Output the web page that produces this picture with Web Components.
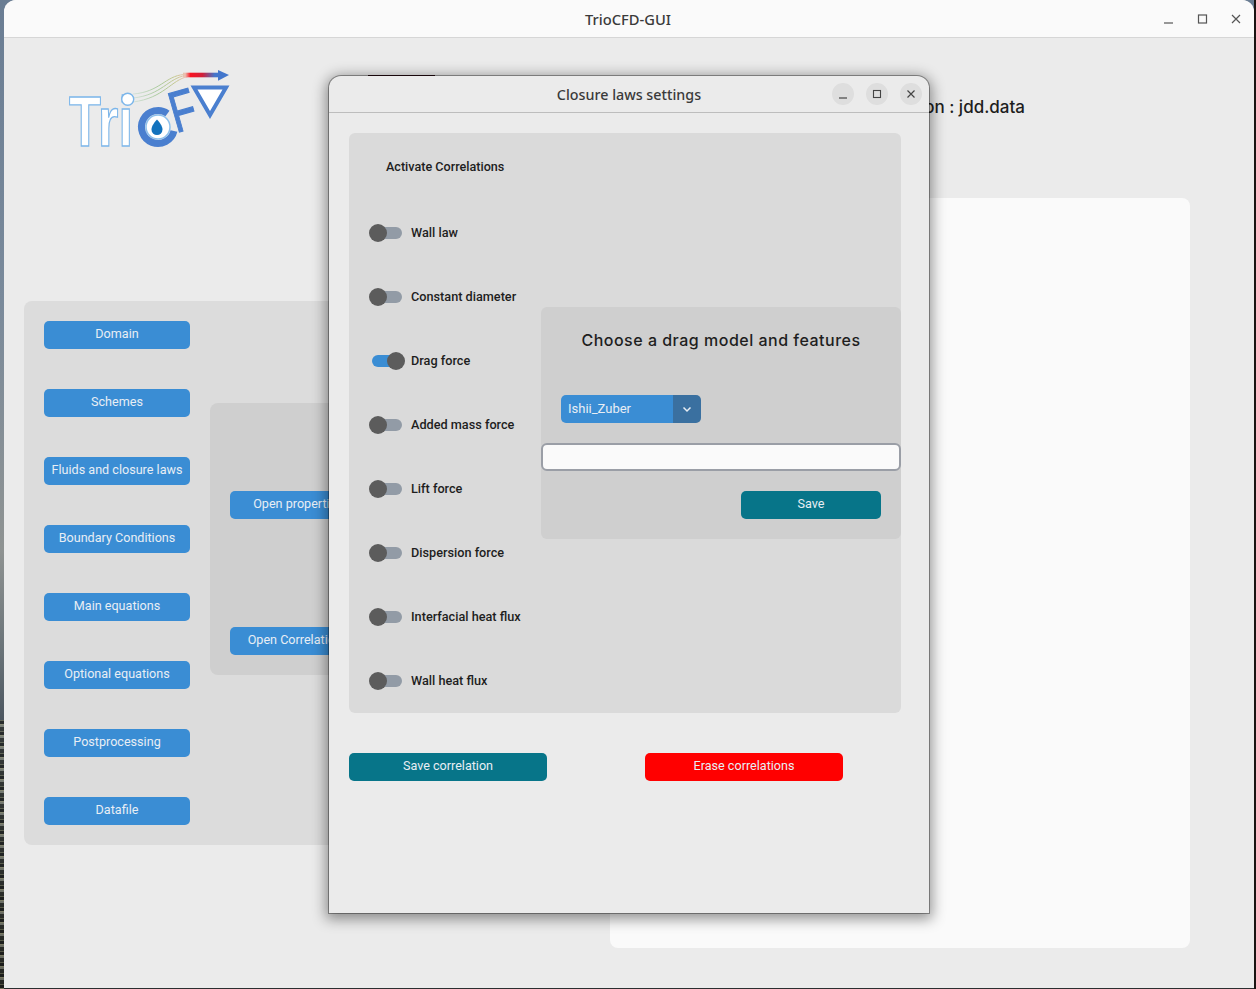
<!DOCTYPE html>
<html>
<head>
<meta charset="utf-8">
<title>TrioCFD-GUI</title>
<style>
html, body { margin: 0; height: 100%; overflow: hidden; }
body {
	width: 1256px;
	height: 989px;
	position: relative;
	font-family: Roboto, "Liberation Sans", sans-serif;
	background:
		linear-gradient(#1a1412, #1a1412) 1254px 0 / 2px 989px no-repeat,
		repeating-linear-gradient(0deg, rgba(210,205,150,.45) 0 1px, rgba(15,15,10,.6) 1px 4px, rgba(120,120,85,.5) 4px 5px, rgba(30,30,20,.5) 5px 9px, rgba(190,190,160,.4) 9px 11px) 0 720px / 4px 269px no-repeat,
		linear-gradient(180deg, #6a7d93 0, #7a8a9b 300px, #8f9392 550px, #6a7378 650px, #4c5660 720px, #2b2e30 989px);
}
</style>
</head>
<body>
<template id="tplButton">
	<style>
	:host { display: block; width: var(--w, 146px); }
	.btn {
		display: flex; align-items: center; justify-content: center;
		height: 28px;
		padding-bottom: 4px;
		box-sizing: border-box;
		border-radius: 5px;
		background: var(--bg, #3a8dd4);
		color: #e8eef4;
		font: 12.600px Roboto, "Liberation Sans", sans-serif;
		white-space: nowrap;
		overflow: hidden;
	}
	</style>
	<div class="btn"><slot></slot></div>
</template>

<template id="tplSwitch">
	<style>
	:host { display: flex; align-items: center; height: 18px; color: #1e1e1e; font: 500 12.700px Roboto, "Liberation Sans", sans-serif; }
	.sw { position: relative; width: 33px; height: 18px; margin-right: 9px; flex: none; }
	.track { position: absolute; left: 3px; right: 0; top: 3px; height: 12px; border-radius: 6px; background: #929ba6; }
	.knob { position: absolute; left: 0; top: 0; width: 18px; height: 18px; border-radius: 50%; background: #5c5c5c; }
	:host([on]) .track { background: #3a8dd4; right: 3px; }
	:host([on]) .knob { left: 18px; }
	.label { padding-bottom: 2px; }
	</style>
	<div class="sw"><div class="track"></div><div class="knob"></div></div>
	<div class="label"><slot></slot></div>
</template>

<template id="tplLogo">
	<style>:host { display: block; width: 170px; height: 90px; } svg { display: block; overflow: visible; }</style>
	<svg width="170" height="90" viewBox="64 65 170 90" xmlns="http://www.w3.org/2000/svg">
		<defs>
			<linearGradient id="flow" x1="133" x2="220" y1="0" y2="0" gradientUnits="userSpaceOnUse">
				<stop offset="0" stop-color="#d5e2dc"/>
				<stop offset=".3" stop-color="#a8c99a"/>
				<stop offset=".5" stop-color="#c8c890"/>
				<stop offset=".6" stop-color="#ecc0b4"/>
				<stop offset=".66" stop-color="#fa1220"/>
				<stop offset=".8" stop-color="#d0203a"/>
				<stop offset=".94" stop-color="#4276cc"/>
			</linearGradient>
		</defs>
		<g fill="none" stroke="url(#flow)" stroke-width="1">
			<path d="M133 94C160 92 165 76 184 74.500L200 74.500"/>
			<path d="M133 98C162 95 168 78 186 75.500L200 75.500"/>
			<path d="M133 102C164 98 171 80 188 76.500L200 76.500"/>
		</g>
		<rect x="183" y="72.700" width="36" height="4.600" fill="url(#flow)"/>
		<path d="M218 70L229 75L218 80.700Z" fill="#4276cc"/>
		<text x="69" y="146" font-family="Liberation Sans" font-weight="700" font-size="71" textLength="64" lengthAdjust="spacingAndGlyphs" fill="#fff" stroke="#7cb6ea" stroke-width="1.400">Tri</text>
		<circle cx="127.700" cy="99.300" r="6" fill="#fff" stroke="#7cb6ea" stroke-width="1.400"/>
		<circle cx="158" cy="127" r="12" fill="#fff" stroke="#8cc0ec" stroke-width="1.500"/>
		<path d="M167.500 113.500A16.500 16.500 0 1 0 174 131" fill="none" stroke="#4a7fcf" stroke-width="7"/>
		<path d="M157 119.500C153 124 151.500 127 151.500 129.500A5.500 5.500 0 0 0 162.500 129.500C162.500 127 161 124 157 119.500Z" fill="#1272bd"/>
		<text transform="translate(176 133) rotate(-16) scale(.72 1)" font-family="Liberation Sans" font-size="58" fill="#4a7fcf" stroke="#4a7fcf" stroke-width="1.200">F</text>
		<path d="M194 87.500H226L210 115Z" fill="#fff" stroke="#4a7fcf" stroke-width="4"/>
	</svg>
</template>

<template id="tplMainWindow">
	<style>
	:host {
		display: block;
		position: absolute;
		left: 4px; top: 0;
		width: 1250px; height: 988px;
		background: #ebebeb;
		border-radius: 12px 12px 0 0;
		overflow: hidden;
		color: #1e1e1e;
	}
	.bar {
		height: 37px;
		background: #fafafa;
		border-bottom: 1px solid #d6d6d6;
		position: relative;
		display: flex; align-items: center; justify-content: center;
		font: 500 14.700px "Noto Sans", sans-serif;
		color: #3a3a3a;
		padding-right: 2px;
	}
	.ctl { position: absolute; right: 1px; top: 0; height: 37px; display: flex; align-items: center; }
	.ctl svg { display: block; width: 34px; height: 37px; }
	.content {
		display: grid;
		grid-template-columns: 586px 1fr;
		height: 950px;
	}
	.left { padding-left: 20px; }
	.logo { margin: 27px 0 0 40px; height: 236px; }
	.side {
		display: flex;
		background: #dcdcdc;
		border-radius: 8px;
		height: 544px;
		width: 566px;
		box-sizing: border-box;
		padding: 20px;
		gap: 20px;
	}
	.nav { display: flex; flex-direction: column; gap: 40px; }
	.sub {
		margin-top: 82px;
		height: 272px;
		width: 340px;
		background: #cfcfcf;
		border-radius: 8px;
		box-sizing: border-box;
		padding: 88px 20px 0;
		display: flex; flex-direction: column; gap: 108px;
	}
	.sub ::slotted(my-button) { --w: 136px; }
	.sim {
		height: 160px;
		width: 435px;
		text-align: right;
		font: 500 17px Inter, "Noto Sans", sans-serif;
		padding-top: 59px;
		box-sizing: border-box;
	}
	.view {
		width: 580px; height: 750px;
		margin-left: 20px;
		background: #fafafa;
		border-radius: 8px;
	}
	.tab { position: absolute; left: 364px; top: 75px; width: 67px; height: 1px; background: #301016; }
	</style>
	<div class="bar">
		<slot name="title"></slot>
		<div class="ctl">
			<svg viewBox="0 0 34 37"><path d="M13 23H22" stroke="#555" stroke-width="1.200"/></svg>
			<svg viewBox="0 0 34 37"><rect x="13.500" y="15" width="8" height="8" fill="none" stroke="#555" stroke-width="1.200"/></svg>
			<svg viewBox="0 0 34 37"><path d="M13 15L21 23M21 15L13 23" stroke="#555" stroke-width="1.200"/></svg>
		</div>
	</div>
	<div class="tab"></div>
	<div class="content">
		<div class="left">
			<div class="logo"><trio-logo></trio-logo></div>
			<div class="side">
				<div class="nav"><slot name="nav"></slot></div>
				<div class="sub"><slot name="sub"></slot></div>
			</div>
		</div>
		<div class="right">
			<div class="sim"><slot name="sim"></slot></div>
			<div class="view"></div>
		</div>
	</div>
</template>

<template id="tplDialog">
	<style>
	:host {
		display: block;
		position: absolute;
		left: 329px; top: 76px;
		width: 600px; height: 837px;
		background: #ebebeb;
		border-radius: 12px 12px 0 0;
		box-shadow: 0 0 0 1px rgba(0,0,0,.35), 0 3px 14px 3px rgba(0,0,0,.42);
		color: #1e1e1e;
	}
	.bar {
		height: 36px;
		border-bottom: 1px solid #bdbdbd;
		position: relative;
		display: flex; align-items: center; justify-content: center;
		font: 500 14.300px "Noto Sans", sans-serif;
		color: #3a3a3a;
	}
	.ctl { position: absolute; right: 7px; top: 7px; display: flex; gap: 12px; }
	.ctl svg { display: block; width: 22px; height: 22px; }
	.body { padding: 20px 28px 0 20px; }
	.panel {
		background: #dadada;
		border-radius: 6px;
		height: 580px;
		display: grid;
		grid-template-columns: 192px 360px;
		align-items: start;
	}
	.list { padding: 24px 0 0 20px; display: flex; flex-direction: column; }
	.head { font: 500 12.600px Roboto, "Liberation Sans", sans-serif; margin: 0 0 0 17px; height: 19px; line-height: 19px; }
	.rows { display: flex; flex-direction: column; gap: 46px; margin-top: 48px; }
	.drag {
		margin-top: 174px;
		height: 232px;
		background: #cfcfcf;
		border-radius: 6px;
	}
	.actions { display: flex; gap: 98px; margin-top: 40px; }
	</style>
	<div class="bar">
		<slot name="title"></slot>
		<div class="ctl">
			<svg viewBox="0 0 22 22"><circle cx="11" cy="11" r="11" fill="#dedede"/><path d="M7 15H15" stroke="#444" stroke-width="1.200"/></svg>
			<svg viewBox="0 0 22 22"><circle cx="11" cy="11" r="11" fill="#dedede"/><rect x="7.500" y="7.500" width="7" height="7" fill="none" stroke="#444" stroke-width="1.100"/></svg>
			<svg viewBox="0 0 22 22"><circle cx="11" cy="11" r="11" fill="#dedede"/><path d="M7.500 7.500L14.500 14.500M14.500 7.500L7.500 14.500" stroke="#444" stroke-width="1.200"/></svg>
		</div>
	</div>
	<div class="body">
		<div class="panel">
			<div class="list">
				<div class="head"><slot name="head"></slot></div>
				<div class="rows"><slot name="rows"></slot></div>
			</div>
			<div class="drag"><slot name="drag"></slot></div>
		</div>
		<div class="actions"><slot name="actions"></slot></div>
	</div>
</template>

<template id="tplDrag">
	<style>
	:host { display: block; height: 100%; }
	h2 {
		margin: 0;
		padding-top: 21px;
		height: 88px;
		box-sizing: border-box;
		text-align: center;
		font: 500 16px/24px Inter, "Noto Sans", sans-serif;
		letter-spacing: .5px;
		color: #1e1e1e;
	}
	.combo {
		display: flex;
		width: 140px; height: 28px;
		margin-left: 20px;
		border-radius: 5px;
		overflow: hidden;
		color: #e8eef4;
		font: 13px Roboto, "Liberation Sans", sans-serif;
	}
	.combo .val { flex: 1; background: #3a8dd4; padding-left: 7px; line-height: 27px; }
	.combo .arr { width: 28px; background: #3a70a0; display: flex; align-items: center; justify-content: center; }
	.entry {
		display: block;
		margin-top: 20px;
		height: 28px;
		box-sizing: border-box;
		border: 2px solid #9a9ea6;
		border-radius: 6px;
		background: #fafafa;
	}
	.foot { display: flex; justify-content: flex-end; padding: 20px 20px 0 0; }
	my-button { --w: 140px; --bg: #077589; }
	</style>
	<h2><slot name="title"></slot></h2>
	<div class="combo">
		<div class="val"><slot name="value"></slot></div>
		<div class="arr"><svg width="12" height="12" viewBox="0 0 12 12"><path d="M2.500 4.500L6 8L9.500 4.500" fill="none" stroke="#e8eef4" stroke-width="1.500"/></svg></div>
	</div>
	<div class="entry"></div>
	<div class="foot"><my-button><slot name="save"></slot></my-button></div>
</template>

<main-window>
	<span slot="title">TrioCFD-GUI</span>
	<my-button slot="nav">Domain</my-button>
	<my-button slot="nav">Schemes</my-button>
	<my-button slot="nav">Fluids and closure laws</my-button>
	<my-button slot="nav">Boundary Conditions</my-button>
	<my-button slot="nav">Main equations</my-button>
	<my-button slot="nav">Optional equations</my-button>
	<my-button slot="nav">Postprocessing</my-button>
	<my-button slot="nav">Datafile</my-button>
	<my-button slot="sub">Open properties</my-button>
	<my-button slot="sub">Open Correlations</my-button>
	<span slot="sim">Simulation : jdd.data</span>
</main-window>

<closure-dialog>
	<span slot="title">Closure laws settings</span>
	<span slot="head">Activate Correlations</span>
	<my-switch slot="rows">Wall law</my-switch>
	<my-switch slot="rows">Constant diameter</my-switch>
	<my-switch slot="rows" on>Drag force</my-switch>
	<my-switch slot="rows">Added mass force</my-switch>
	<my-switch slot="rows">Lift force</my-switch>
	<my-switch slot="rows">Dispersion force</my-switch>
	<my-switch slot="rows">Interfacial heat flux</my-switch>
	<my-switch slot="rows">Wall heat flux</my-switch>
	<drag-panel slot="drag">
		<span slot="title">Choose a drag model and features</span>
		<span slot="value">Ishii_Zuber</span>
		<span slot="save">Save</span>
	</drag-panel>
	<my-button slot="actions" style="--w:198px;--bg:#077589">Save correlation</my-button>
	<my-button slot="actions" style="--w:198px;--bg:#ff0000">Erase correlations</my-button>
</closure-dialog>

<script>
// small helper, every element here is only a template in an open shadow root
function define(tag, tplId) {
	customElements.define(tag, class extends HTMLElement {
		constructor() {
			super();
			this.attachShadow({mode: 'open'});
			this.shadowRoot.appendChild(document.getElementById(tplId).content.cloneNode(true));
		}
	});
}
define('my-button', 'tplButton');
define('my-switch', 'tplSwitch');
define('trio-logo', 'tplLogo');
define('drag-panel', 'tplDrag');
define('main-window', 'tplMainWindow');
define('closure-dialog', 'tplDialog');
</script>
</body>
</html>
